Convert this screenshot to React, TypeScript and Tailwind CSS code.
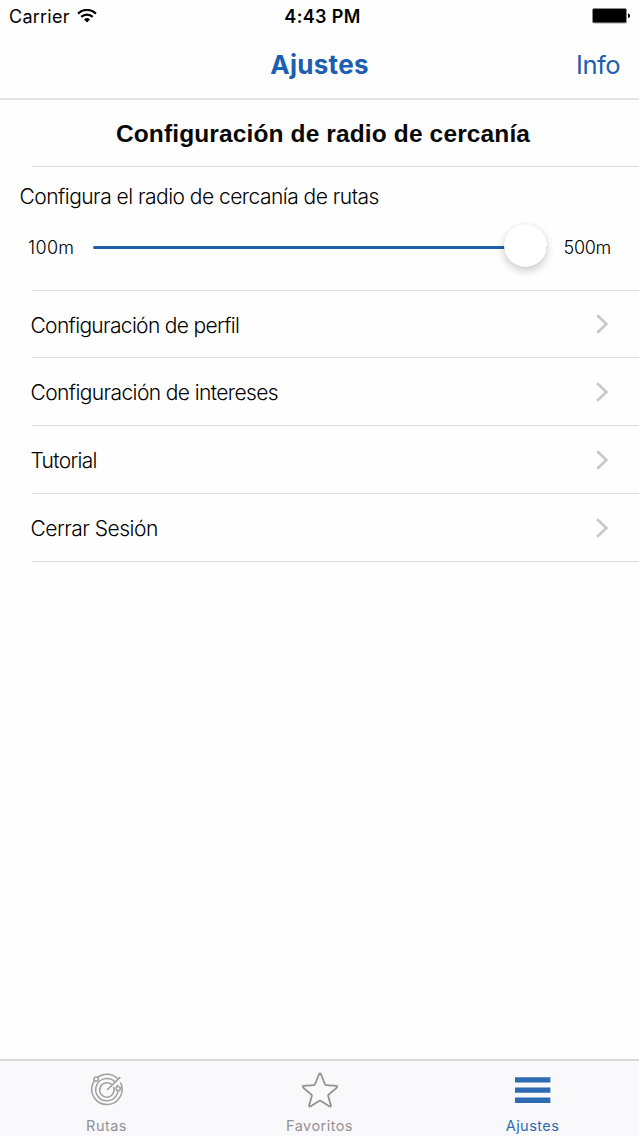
import { useState, type ReactNode } from 'react'

type TabId = 'rutas' | 'favoritos' | 'ajustes'

interface MenuItem {
  label: string
  className: string
}

const MENU_ITEMS: MenuItem[] = [
  { label: 'Configuración de perfil', className: 'h-[67px] tracking-[-0.67px]' },
  { label: 'Configuración de intereses', className: 'h-[68px] tracking-[-0.6px]' },
  { label: 'Tutorial', className: 'h-[68px] tracking-[-0.7px]' },
  { label: 'Cerrar Sesión', className: 'h-[68px] tracking-[-0.5px]' },
]

function WifiIcon() {
  return (
    <svg width="20" height="15" viewBox="0 0 20 15" fill="none" stroke="#000" strokeWidth="2.2" aria-hidden="true">
      <path d="M1.1 4.6a12.6 12.6 0 0 1 17.8 0" />
      <path d="M4.3 7.9a8.1 8.1 0 0 1 11.4 0" />
      <path d="M7 10.5a4.3 4.3 0 0 1 6 0L10 13.5z" fill="#000" stroke="none" />
    </svg>
  )
}

function BatteryIcon() {
  return (
    <svg width="38" height="16" viewBox="0 0 38 16" aria-hidden="true">
      <rect x="0.5" y="0.5" width="34" height="14.4" rx="1.5" fill="#000" stroke="#8a8a8a" strokeWidth="1" />
      <path d="M36 5.4c1.6.4 2 1.2 2 2.3s-.4 1.9-2 2.3z" fill="#000" />
    </svg>
  )
}

function ChevronIcon() {
  return (
    <svg width="13" height="20" viewBox="0 0 13 20" fill="none" stroke="#c7c7cc" strokeWidth="2.6" aria-hidden="true">
      <path d="M1.2 1.2 10.4 10 1.2 18.8" />
    </svg>
  )
}

function RadarIcon() {
  return (
    <svg width="34" height="34" viewBox="0 0 34 34" fill="none" stroke="#a0a0a3" strokeWidth="1.5" aria-hidden="true">
      <path d="M27.8 5.8A15.2 15.2 0 1 0 30.4 9.4" />
      <path d="M25 8.9a11.2 11.2 0 1 0 2 2.9" />
      <path d="M21.9 11.8a7.2 7.2 0 1 0 1.5 2.1" />
      <path d="M17 17 30.3 4.2" strokeWidth="1.6" />
      <circle cx="6.1" cy="6.1" r="2.2" fill="#f9f8fb" />
      <circle cx="28.2" cy="15.6" r="2.2" fill="#f9f8fb" />
    </svg>
  )
}

function StarIcon() {
  return (
    <svg width="36" height="36" viewBox="0 0 36 36" fill="none" stroke="#929295" strokeWidth="1.8" strokeLinejoin="round" aria-hidden="true">
      <path d="M17.1 2.2q.9-1.7 1.8 0l4.2 10.3q.3.7 1 .7l10.3.7q1.6.4.4 1.7l-8.3 7.1q-.5.5-.3 1.2l2.7 9.3q.1 1.9-1.6 1.1L18.9 29q-.9-.5-1.8 0l-8.4 5.3q-1.7.8-1.6-1.1l2.7-9.3q.2-.7-.3-1.2l-8.3-7.1q-1.2-1.3.4-1.7l10.3-.7q.7 0 1-.7z" />
    </svg>
  )
}

function MenuIcon() {
  return (
    <svg width="36" height="27" viewBox="0 0 36 27" fill="#2d6bb3" aria-hidden="true">
      <path d="M0 .2h35.4v5.3H0zM0 10.4h35.4v5.3H0zM0 20.6h35.4v5.3H0z" />
    </svg>
  )
}

function StatusBar() {
  return (
    <div className="grid h-8 grid-cols-3 items-center pr-[9px] pl-[9px] text-[18px] text-black">
      <div className="flex items-center gap-[7px]">
        <span className="tracking-[0.25px]">Carrier</span>
        <WifiIcon />
      </div>
      <span className="pl-[6px] text-center font-semibold tracking-[0.35px]">4:43 PM</span>
      <span className="flex justify-end">
        <BatteryIcon />
      </span>
    </div>
  )
}

function RadiusSlider() {
  return (
    <div className="flex h-[44px] items-center text-[18px] font-light text-black">
      <span className="w-[64.5px] tracking-[0.35px]">100m</span>
      <div className="relative h-[3px] w-[454px] rounded-full bg-[#1f5fa8]">
        <span className="absolute -top-[22px] right-0 size-[43px] rounded-full bg-white shadow-[0_4px_8px_rgba(0,0,0,0.2),0_0_2px_rgba(0,0,0,0.08)]" />
      </div>
      <span className="ml-[17px] tracking-[-0.3px]">500m</span>
    </div>
  )
}

interface TabButtonProps {
  label: string
  active: boolean
  onClick: () => void
  children: ReactNode
}

function TabButton({ label, active, onClick, children }: TabButtonProps) {
  return (
    <button
      type="button"
      onClick={onClick}
      className={`flex flex-col items-center pt-[10px] ${active ? 'text-[#2d6bb3]' : 'text-[#929295]'}`}
    >
      <span className="flex h-[38px] items-center">{children}</span>
      <span className="mt-[7px] text-[14.5px] leading-[20px] tracking-[0.45px]">{label}</span>
    </button>
  )
}

export default function App() {
  const [tab, setTab] = useState<TabId>('ajustes')

  return (
    <div className="flex h-[1136px] w-[639px] flex-col overflow-hidden bg-[#fefefe] font-['Inter',sans-serif]">
      <header className="h-[100px] border-b-2 border-[#e3e2e6]">
        <StatusBar />
        <div className="grid h-[65px] grid-cols-3 items-center px-[19px] text-[26px] text-[#1c5fb0]">
          <h1 className="col-start-2 text-center font-bold tracking-[0.3px]">Ajustes</h1>
          <button type="button" className="pt-[2px] text-right text-[25.5px] tracking-[-0.5px]">
            Info
          </button>
        </div>
      </header>

      <main className="flex-1">
        <h2 className="ml-8 flex h-[67px] items-center justify-center border-b border-[#dddde0] pt-[3px] pr-[25px] font-['Liberation_Sans',Arial,sans-serif] text-[24.5px] font-bold tracking-[0.13px] text-[#080808]">
          Configuración de radio de cercanía
        </h2>

        <section className="h-[123px] pt-[15px]">
          <p className="pl-[19.5px] text-[21px] leading-[30px] font-light tracking-[-0.52px] text-black">
            Configura el radio de cercanía de rutas
          </p>
          <div className="mt-[13px] pl-[28px]">
            <RadiusSlider />
          </div>
        </section>

        <ul className="ml-8 border-t border-[#dddde0] text-[21px] font-light text-black">
          {MENU_ITEMS.map((item) => (
            <li key={item.label} className={`border-b border-[#dddde0] ${item.className}`}>
              <button type="button" className="flex h-full w-full items-center justify-between pr-[30px] text-left">
                <span className="-ml-[1.5px] pt-[3px]">{item.label}</span>
                <ChevronIcon />
              </button>
            </li>
          ))}
        </ul>
      </main>

      <nav className="grid h-[77px] grid-cols-3 border-t-2 border-[#d9d8dc] bg-[#f9f8fb]">
        <TabButton label="Rutas" active={tab === 'rutas'} onClick={() => setTab('rutas')}>
          <RadarIcon />
        </TabButton>
        <TabButton label="Favoritos" active={tab === 'favoritos'} onClick={() => setTab('favoritos')}>
          <StarIcon />
        </TabButton>
        <TabButton label="Ajustes" active={tab === 'ajustes'} onClick={() => setTab('ajustes')}>
          <MenuIcon />
        </TabButton>
      </nav>
    </div>
  )
}
